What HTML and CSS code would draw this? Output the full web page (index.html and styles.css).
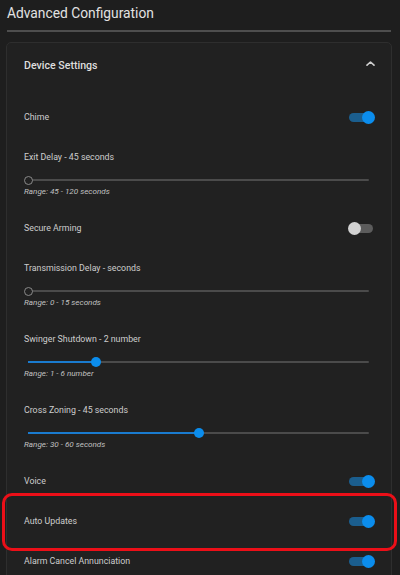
FILE: index.html
```html
<!DOCTYPE html>
<html lang="en">
<head>
<meta charset="utf-8">
<title>Advanced Configuration</title>
<link rel="stylesheet" href="styles.css">
</head>
<body>
<div class="page">
  <h1 class="title">Advanced Configuration</h1>
  <div class="divider"></div>
  <section class="card">
    <header class="card-head">
      <span class="card-title">Device Settings</span>
      <svg class="chevron" width="9" height="5" viewBox="0 0 9 5"><path d="M1 4.2 L4.5 1 L8 4.2" fill="none" stroke="#cfcfcf" stroke-width="1.6" stroke-linecap="round" stroke-linejoin="round"/></svg>
    </header>
    <div class="settings">
      <div class="toggle-row"><span class="label">Chime</span><span class="switch on"></span></div>

      <div class="slider-block">
        <div class="label">Exit Delay - 45 seconds</div>
        <div class="slider"><div class="track"><div class="fill" style="width:0%"></div><div class="thumb empty" style="left:0%"></div></div></div>
        <div class="range">Range: 45 - 120 seconds</div>
      </div>

      <div class="toggle-row"><span class="label">Secure Arming</span><span class="switch off"></span></div>

      <div class="slider-block">
        <div class="label">Transmission Delay - seconds</div>
        <div class="slider"><div class="track"><div class="fill" style="width:0%"></div><div class="thumb empty" style="left:0%"></div></div></div>
        <div class="range">Range: 0 - 15 seconds</div>
      </div>

      <div class="slider-block">
        <div class="label">Swinger Shutdown - 2 number</div>
        <div class="slider"><div class="track"><div class="fill" style="width:20%"></div><div class="thumb" style="left:20%"></div></div></div>
        <div class="range">Range: 1 - 6 number</div>
      </div>

      <div class="slider-block">
        <div class="label">Cross Zoning - 45 seconds</div>
        <div class="slider"><div class="track"><div class="fill" style="width:50%"></div><div class="thumb" style="left:50%"></div></div></div>
        <div class="range">Range: 30 - 60 seconds</div>
      </div>

      <div class="toggle-row"><span class="label">Voice</span><span class="switch on"></span></div>
      <div class="toggle-row highlighted"><span class="label">Auto Updates</span><span class="switch on"></span><span class="highlight"></span></div>
      <div class="toggle-row"><span class="label">Alarm Cancel Annunciation</span><span class="switch on"></span></div>
    </div>
  </section>
</div>
</body>
</html>
```

FILE: styles.css
```css
html, body {
  margin: 0;
  padding: 0;
  background: #1e1e1e;
  height: 100%;
  overflow: hidden;
}

body {
  font-family: Roboto, "Liberation Sans", sans-serif;
  color: #cfcfcf;
}

.page {
  width: 386px;
  padding: 0 8px 0 6px;
  border-right: 1px solid #2c2c2c;
  box-sizing: content-box;
  min-height: 575px;
}

.title {
  margin: 0;
  padding-left: 1px;
  font-size: 13.8px;
  font-weight: 400;
  line-height: 26px;
  color: #e2e2e2;
}

.divider {
  margin: 4px 1px 0 1px;
  height: 2px;
  background: #4e4e4e;
}

.card {
  margin-top: 10px;
  background: #212121;
  border: 1px solid #2e2e2e;
  border-radius: 5px;
  padding: 0 16px;
}

.card-head {
  height: 44px;
  display: flex;
  align-items: center;
  justify-content: space-between;
}

.card-title {
  font-size: 10.6px;
  font-weight: 500;
  color: #dedede;
  padding-left: 1px;
}

.chevron {
  margin-right: 0;
  margin-top: -3px;
}

.settings {
  padding-top: 10px;
  display: flex;
  flex-direction: column;
}

.label {
  font-size: 8.8px;
  line-height: 14px;
  color: #cdcdcd;
  padding-left: 1px;
}

.toggle-row {
  position: relative;
  height: 40px;
  display: flex;
  align-items: center;
  justify-content: space-between;
}

.switch {
  position: relative;
  width: 27px;
  height: 14px;
}

.switch::before {
  content: "";
  position: absolute;
  left: 1px;
  right: 2px;
  top: 2.5px;
  height: 9px;
  border-radius: 5px;
}

.switch::after {
  content: "";
  position: absolute;
  top: 0.5px;
  width: 13px;
  height: 13px;
  border-radius: 50%;
}

.switch.on::before { background: #1b5e8e; }
.switch.on::after { right: 0; background: #0b8ded; }
.switch.off::before { background: #5c5c5c; }
.switch.off::after { left: 0; background: #d2d2d2; }

.slider-block {
  padding: 13px 0 12px 0;
  display: flex;
  flex-direction: column;
}

.slider {
  margin-top: 10px;
  height: 12px;
  padding: 0 6px 0 5px;
  display: flex;
  align-items: center;
}

.track {
  position: relative;
  flex: 1;
  height: 2px;
  background: #4b4b4b;
  border-radius: 1px;
}

.fill {
  height: 100%;
  background: #1a7bcf;
}

.thumb {
  position: absolute;
  top: 50%;
  width: 10px;
  height: 10px;
  margin-left: -5px;
  margin-top: -5px;
  border-radius: 50%;
  background: #0b8ded;
  box-sizing: border-box;
}

.thumb.empty {
  width: 9px;
  height: 9px;
  margin-left: -4px;
  margin-top: -4.5px;
  background: #212121;
  border: 1.4px solid #8a8a8a;
}

.range {
  font-size: 8.1px;
  line-height: 10px;
  font-style: italic;
  color: #c0c0c0;
  padding-left: 1px;
}

.highlight {
  position: absolute;
  left: -21px;
  right: -22px;
  top: -8px;
  bottom: -10px;
  border: 3px solid #ec0f18;
  border-radius: 10px;
  pointer-events: none;
}
```
